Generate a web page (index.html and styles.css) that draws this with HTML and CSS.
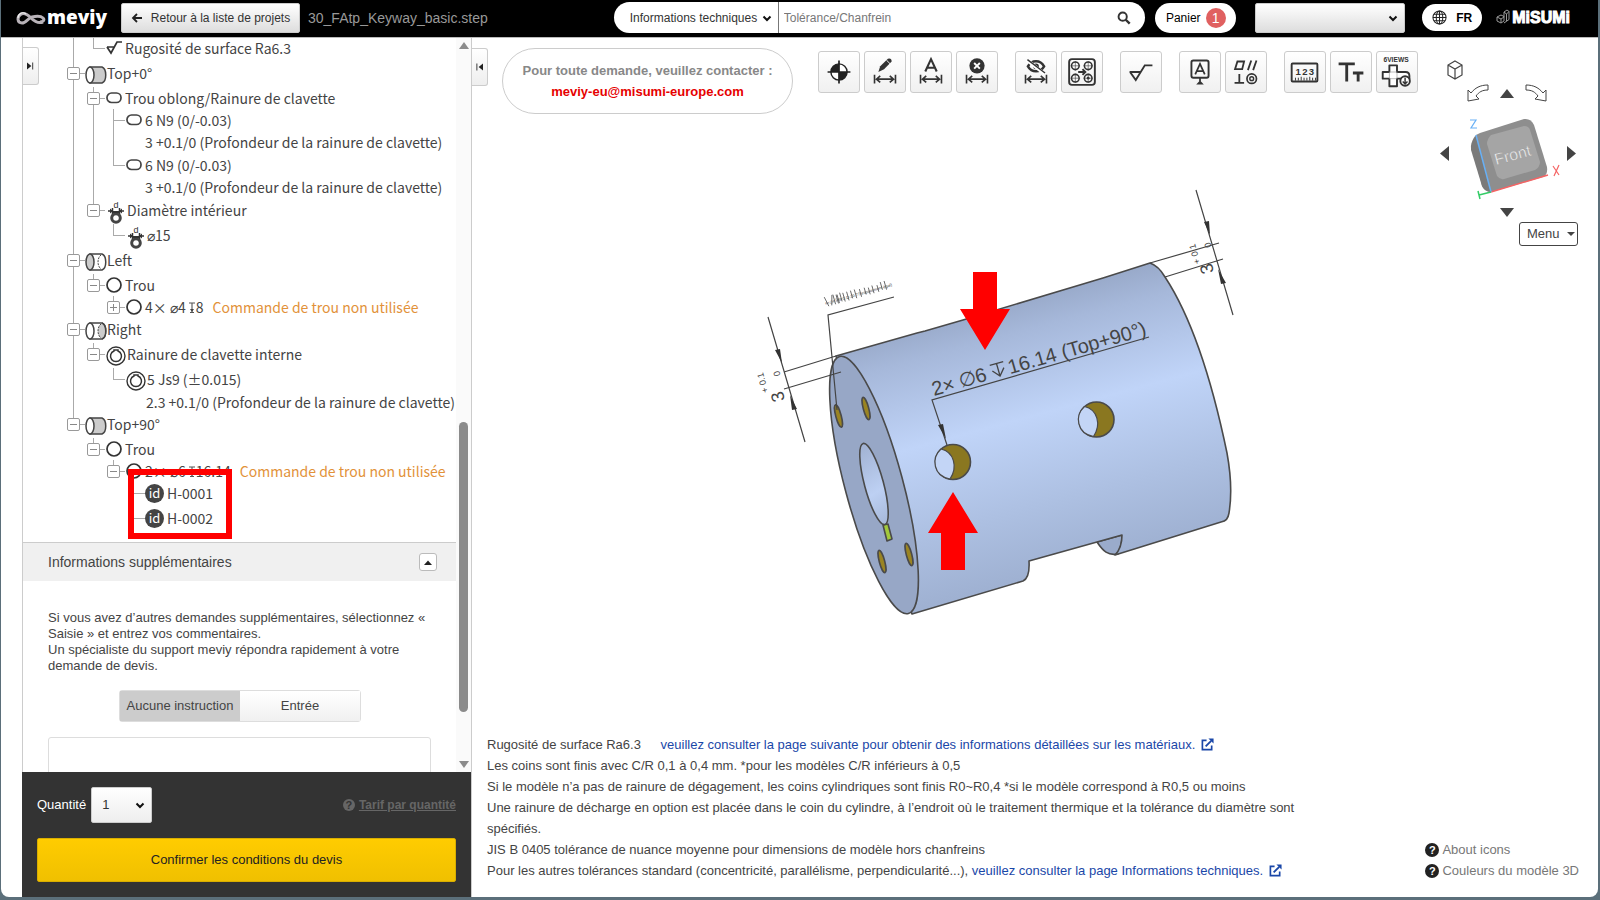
FILE: index.html
```html
<!DOCTYPE html>
<html lang="fr">
<head>
<meta charset="utf-8">
<title>meviy</title>
<link rel="stylesheet" href="styles.css">
</head>
<body>
<svg class="defs" aria-hidden="true">
  <defs>
    <symbol id="cyl-side" viewBox="0 0 22 18"><path d="M5 1h12c5 2 5 14 0 16H5z" fill="#ccc" stroke="#444" stroke-width="1.5"/><ellipse cx="5" cy="9" rx="4" ry="8" fill="#fff" stroke="#444" stroke-width="1.5"/></symbol>
    <symbol id="cyl-left" viewBox="0 0 22 18"><path d="M5 1h12c5 2 5 14 0 16H5z" fill="#fff" stroke="#444" stroke-width="1.5"/><path d="M16 2c-4 3-4 11 0 14" fill="none" stroke="#444" stroke-dasharray="2 1"/><ellipse cx="5" cy="9" rx="4" ry="8" fill="#ccc" stroke="#444" stroke-width="1.5"/></symbol>
    <symbol id="cyl-right" viewBox="0 0 22 18"><path d="M5 1h12c5 2 5 14 0 16H5z" fill="#fff" stroke="#444" stroke-width="1.5"/><path d="M16 2c-4 3-4 11 0 14h1c4-2 4-12 0-14z" fill="#ccc"/><path d="M16 2c-4 3-4 11 0 14" fill="none" stroke="#444" stroke-dasharray="2 1"/><path d="M17 1c5 2 5 14 0 16" fill="none" stroke="#444" stroke-width="1.5"/><ellipse cx="5" cy="9" rx="4" ry="8" fill="#fff" stroke="#444" stroke-width="1.5"/></symbol>
    <symbol id="slot" viewBox="0 0 16 16"><rect x="1" y="3" width="14" height="9.500" rx="4.500" fill="none" stroke="#444" stroke-width="1.700"/></symbol>
    <symbol id="hole" viewBox="0 0 16 16"><circle cx="8" cy="8" r="7" fill="none" stroke="#333" stroke-width="1.700"/></symbol>
    <symbol id="rough" viewBox="0 0 16 16"><path d="M1 7h8M1 7l4 6 6-11h5" fill="none" stroke="#333" stroke-width="1.700"/></symbol>
    <symbol id="dia" viewBox="0 0 16 22"><text x="5.500" y="6" font-size="9" font-family="Liberation Sans" fill="#333">d</text><path d="M0 9h4M12 9h4M4.500 6v9M11.500 6v9" stroke="#333" stroke-width="1.500"/><path d="M2 6.500 5 9 2 11.500zM14 6.500 11 9l3 2.500z" fill="#333"/><circle cx="8" cy="16" r="4.300" fill="none" stroke="#444" stroke-width="3"/><path d="M5 10h6" stroke="#333" stroke-width="2"/></symbol>
    <symbol id="keyway" viewBox="0 0 20 20"><circle cx="10" cy="10" r="9" fill="none" stroke="#333" stroke-width="1.400"/><path d="M8 5V4h4v1a5.500 5.500 0 1 1-4 0z" fill="none" stroke="#333" stroke-width="1.500"/></symbol>
    <symbol id="depth" viewBox="0 0 6 11"><path d="M0 1h6M3 1v9M1 10.500h4" stroke="#555" stroke-width="1.100"/><path d="M1 7h4L3 10z" fill="#444"/></symbol>
    <symbol id="chev" viewBox="0 0 10 7"><path d="M1.500 1.500L5 5l3.500-3.500" fill="none" stroke="#111" stroke-width="2"/></symbol>
    <symbol id="dim" viewBox="0 0 42 42"><path d="M10 24v9M32 24v9M12 28.500h18M16 25l-4 3.500 4 3.500M26 25l4 3.500-4 3.500" fill="none" stroke="#333" stroke-width="1.700"/></symbol>
    <symbol id="ext" viewBox="0 0 14 14"><path d="M6 2.500H1.500v10h10V8" fill="none" stroke="#1a47a8" stroke-width="1.800"/><path d="M5 9l6-6" stroke="#1a47a8" stroke-width="2"/><path d="M8 .5h5.500V6z" fill="#1a47a8"/></symbol>
  </defs>
</svg>
<div class="window">
  <header class="topbar">
    <a class="logo" href="#"><svg class="logo-mark" viewBox="0 0 30 16"><path d="M27 12c-5 2-9-1-12-4S8 2 4.500 4.500 1 13 6 13c4 0 6-5 10-6s9-1 11 1 0 4-3 4" fill="none" stroke="#b8b2b8" stroke-width="3"/><path d="M10 4C6 1 2 4 2 8" fill="none" stroke="#eee" stroke-width="1.200"/></svg><span>meviy</span></a>
    <button class="back" type="button"><svg viewBox="0 0 12 12"><path d="M11 6H2M6 2 2 6l4 4" fill="none" stroke="#222" stroke-width="1.800"/></svg>Retour à la liste de projets</button>
    <span class="filename">30_FAtp_Keyway_basic.step</span>
    <form class="search">
      <span class="pick search-kind"><select aria-label="Catégorie"><option>Informations techniques</option></select><svg><use href="#chev"/></svg></span>
      <input class="search-text" type="text" placeholder="Tolérance/Chanfrein" aria-label="Recherche">
      <button class="search-go" type="button" aria-label="Rechercher"><svg viewBox="0 0 16 16"><circle cx="6.500" cy="6.500" r="4.700" fill="none" stroke="#333" stroke-width="2.200"/><path d="M10 10l4.500 4.500" stroke="#333" stroke-width="2.800"/></svg></button>
    </form>
    <button class="cart" type="button">Panier <span class="count">1</span></button>
    <span class="pick account"><select aria-label="Compte"><option></option></select><svg><use href="#chev"/></svg></span>
    <button class="lang" type="button"><svg viewBox="0 0 16 16"><g fill="none" stroke="#222" stroke-width="1.100"><circle cx="8" cy="8" r="7"/><ellipse cx="8" cy="8" rx="3.500" ry="7"/><path d="M1 8h14M8 1v14M2 4.500h12M2 11.500h12"/></g></svg>FR</button>
    <a class="misumi" href="#"><svg viewBox="0 0 14 18"><path d="M1 8l4-2 3 1.500V12l-3 2-4-2zM1 8l4 2 3-2M5 10v4M8 3l3-2 2 1.500v8L8 14M8 3v5M8 3l2.500 2L13 2.500M10.500 5v7" fill="none" stroke="#999" stroke-width="1"/></svg><span>MiSUMi</span></a>
  </header>

  <div class="main">
    <aside class="rail"></aside>
    <section class="side">
      <button class="tab tab-left" type="button" aria-label="Ouvrir"><svg viewBox="0 0 8 8"><path d="M0 0l5 4-5 4z" fill="#222"/><path d="M6.500 0v8" stroke="#222"/></svg></button>
      <div class="scroll">
        <div class="scroll-body">
          <ul class="tree">
            <li><ul>
              <li><div class="row leaf h25"><svg class="i16"><use href="#rough"/></svg>Rugosité de surface Ra6.3</div></li>
            </ul></li>
            <li><div class="row root h25"><button class="tog" type="button" aria-label="Réduire"></button><svg class="cyl"><use href="#cyl-side"/></svg>Top+0°</div>
              <ul>
                <li><div class="row h22"><button class="tog" type="button" aria-label="Réduire"></button><svg class="i16"><use href="#slot"/></svg>Trou oblong/Rainure de clavette</div>
                  <ul>
                    <li><div class="row leaf h22"><svg class="i16"><use href="#slot"/></svg>6 N9 (0/-0.03)</div><div class="more h23">3 +0.1/0 (Profondeur de la rainure de clavette)</div></li>
                    <li><div class="row leaf h22"><svg class="i16"><use href="#slot"/></svg>6 N9 (0/-0.03)</div><div class="more h23">3 +0.1/0 (Profondeur de la rainure de clavette)</div></li>
                  </ul></li>
                <li><div class="row wide h25"><button class="tog" type="button" aria-label="Réduire"></button><svg class="i20 tall"><use href="#dia"/></svg>Diamètre intérieur</div>
                  <ul><li><div class="row wide leaf h25"><svg class="i20 tall"><use href="#dia"/></svg>⌀15</div></li></ul></li>
              </ul></li>
            <li><div class="row root h25"><button class="tog" type="button" aria-label="Réduire"></button><svg class="cyl"><use href="#cyl-left"/></svg>Left</div>
              <ul>
                <li><div class="row h22"><button class="tog" type="button" aria-label="Réduire"></button><svg class="i16"><use href="#hole"/></svg>Trou</div>
                  <ul><li><div class="row h22"><button class="tog plus" type="button" aria-label="Développer"></button><svg class="i16"><use href="#hole"/></svg><span>4× ⌀4 <svg class="depth"><use href="#depth"/></svg>8</span><span class="warn">Commande de trou non utilisée</span></div></li></ul></li>
              </ul></li>
            <li><div class="row root h25"><button class="tog" type="button" aria-label="Réduire"></button><svg class="cyl"><use href="#cyl-right"/></svg>Right</div>
              <ul>
                <li><div class="row wide h25"><button class="tog" type="button" aria-label="Réduire"></button><svg class="i20"><use href="#keyway"/></svg>Rainure de clavette interne</div>
                  <ul><li><div class="row wide leaf h23"><svg class="i20"><use href="#keyway"/></svg>5 Js9 (±0.015)</div><div class="more wide h22">2.3 +0.1/0 (Profondeur de la rainure de clavette)</div></li></ul></li>
              </ul></li>
            <li><div class="row root h25"><button class="tog" type="button" aria-label="Réduire"></button><svg class="cyl"><use href="#cyl-side"/></svg>Top+90°</div>
              <ul>
                <li><div class="row h22"><button class="tog" type="button" aria-label="Réduire"></button><svg class="i16"><use href="#hole"/></svg>Trou</div>
                  <ul><li><div class="row h22"><button class="tog" type="button" aria-label="Réduire"></button><svg class="i16"><use href="#hole"/></svg><span>2× ⌀6 <svg class="depth"><use href="#depth"/></svg>16.14</span><span class="warn">Commande de trou non utilisée</span></div>
                    <ul class="ids">
                      <li><div class="row leaf h25"><span class="id">id</span>H-0001</div></li>
                      <li><div class="row leaf h25"><span class="id">id</span>H-0002</div></li>
                    </ul></li></ul></li>
              </ul></li>
          </ul>
          <div class="extra-head"><h2>Informations supplémentaires</h2><button type="button" aria-label="Replier"><svg viewBox="0 0 8 5"><path d="M0 5l4-4.500L8 5z" fill="#222"/></svg></button></div>
          <div class="extra">
            <p>Si vous avez d’autres demandes supplémentaires, sélectionnez «<br>Saisie » et entrez vos commentaires.<br>Un spécialiste du support meviy répondra rapidement à votre<br>demande de devis.</p>
            <div class="seg"><button class="on" type="button">Aucune instruction</button><button type="button">Entrée</button></div>
            <textarea aria-label="Commentaires"></textarea>
          </div>
        </div>
        <div class="bar"><i class="up"></i><i class="thumb"></i><i class="down"></i></div>
      </div>
      <footer class="order">
        <div class="order-row"><label for="qty">Quantité</label><span class="pick qty"><select id="qty"><option>1</option></select><svg><use href="#chev"/></svg></span><a class="tarif" href="#"><b class="q">?</b><u>Tarif par quantité</u></a></div>
        <button class="confirm" type="button">Confirmer les conditions du devis</button>
      </footer>
    </section>

    <section class="view">
      <svg class="model" viewBox="740 180 520 450">
        <defs><linearGradient id="body" gradientUnits="userSpaceOnUse" x1="1000" y1="303" x2="1071" y2="567"><stop offset="0" stop-color="#98a9c9"/><stop offset=".12" stop-color="#a6b8da"/><stop offset=".43" stop-color="#c0d4f8"/><stop offset=".75" stop-color="#adc0e2"/><stop offset="1" stop-color="#9fb1d2"/></linearGradient>
        <linearGradient id="bore" gradientUnits="userSpaceOnUse" x1="862" y1="450" x2="885" y2="520"><stop offset="0" stop-color="#a3b4d5"/><stop offset=".6" stop-color="#bdd0f3"/><stop offset="1" stop-color="#a8badb"/></linearGradient></defs>
        <g stroke="#4a4a4a" stroke-width="1.600" stroke-linejoin="round">
          <path d="M1097 542c6 9 11 14 21 12 3-7 4-13 4-19z" fill="#9aabcb"/>
          <path d="M836 356L917 333l8-2 38-11L1093 281l10-3 47-15c6 2 11 7 15 14 25 38 46 99 62 176 4 22 5 42 2 60-1 6-3 8-8 9L1115 555q7-7 7-20L1029 561q1 17-6 20L912 614z" fill="url(#body)"/>
          <ellipse cx="874" cy="485" rx="29" ry="133" transform="rotate(-15 874 485)" fill="#97a7c6"/>
          <path d="M883 525l5-1 4 15-5 2z" fill="#a3c93a"/>
          <ellipse cx="874" cy="484" rx="9.500" ry="42" transform="rotate(-15 874 484)" fill="url(#bore)"/>
          <g fill="#9a8422"><ellipse cx="838.500" cy="416" rx="2.700" ry="11.500" transform="rotate(-15 838.500 416)"/><ellipse cx="866" cy="408.500" rx="2.700" ry="11.500" transform="rotate(-15 866 408.500)"/><ellipse cx="882" cy="561.500" rx="2.700" ry="11.500" transform="rotate(-15 882 561.500)"/><ellipse cx="909" cy="554.500" rx="2.700" ry="11.500" transform="rotate(-15 909 554.500)"/></g>
          <g id="sidehole"><circle cx="953" cy="462" r="17.500" fill="#8a7720"/><path d="M941 449c13 3 17 18 9 30-17-3-19-21-9-30z" fill="#c3d5f6" stroke-width="1.200"/></g>
          <use href="#sidehole" x="143.500" y="-42.500"/>
        </g>
        <g stroke="#444" stroke-width="1.200" fill="none">
          <path d="M894 297l-66 18 9 95M768 317l37 125M784 372l52-16M784 389l57-17M1196 190l37 125M1150 263l69-20M1165 277l58-18M1149 337L932 400l15 45"/>
        </g>
        <path d="M775 350l5-1 2 14zM792 410l5-1-7-14zM1204 222l5-1 1 14zM1221 284l5-1-8-14zM938 425l5-1 3 15z" fill="#333"/>
        <g fill="#444" font-family="Liberation Sans">
          <g font-size="20" transform="translate(934 396) rotate(-16)"><text>2×</text><text x="28">∅6</text><path d="M62-14h14M69-14v13M63-8l6 7 6-7" fill="none" stroke="#444" stroke-width="1.300"/><text x="79">16.14 (Top+90°)</text></g>
          <g transform="translate(785 400) rotate(-105)"><text font-size="18">3</text><text x="12" y="-14" font-size="9">+</text><text x="20" y="-14" font-size="9">0.1</text><text x="25" y="2" font-size="9">0</text></g>
          <g transform="translate(1214 272) rotate(-105)"><text font-size="18">3</text><text x="12" y="-11" font-size="9">+</text><text x="20" y="-11" font-size="9">0.1</text><text x="25" y="4" font-size="9">0</text></g>
          <g transform="translate(826 307) rotate(-16)"><text y="-2" font-size="4">4×∅4↧8P.C.D.20.77(espacement égal)</text><path d="M1-10l2 10M6 0l3-10M10-10v10M13-9v9M14-9v9M17-10v9M20-9v9M24-9v9M28-9v8M32-9v9M37-8v8M42-8v7M46-7v7M50-8v8M55-7v7M59-9v8M63-9v9" stroke="#555" stroke-width=".8"/></g>
        </g>
        <path d="M973 272h24v37h13l-25 41-25-41h13zM941 570h24v-37h13l-25-41-25 41h13z" fill="#f00"/>
      </svg>

      <div class="view-top">
        <button class="tab" type="button" aria-label="Fermer"><svg viewBox="0 0 8 8"><path d="M8 0L3 4l5 4z" fill="#222"/><path d="M1 0v8" stroke="#222"/></svg></button>
        <p class="contact">Pour toute demande, veuillez contacter :<a href="#">meviy-eu@misumi-europe.com</a></p>
        <div class="tools">
          <div class="grp">
            <button type="button" aria-label="Origine"><svg viewBox="0 0 42 42"><circle cx="21" cy="21" r="8.500" fill="#fff" stroke="#222" stroke-width="1.500"/><path d="M21 21v-8.500A8.500 8.500 0 0 0 12.500 21zM21 21v8.500a8.500 8.500 0 0 0 8.500-8.500z" fill="#222"/><path d="M21 9v24M9 21h24" stroke="#222" stroke-width="1.800"/></svg></button>
            <button type="button" aria-label="Modifier la cote"><svg viewBox="0 0 42 42"><use href="#dim"/><path d="M14 21l2-6 8-8q4-1 4 3l-8 8z" fill="#333"/><path d="M22.500 8.500l4 4" stroke="#fff"/></svg></button>
            <button type="button" aria-label="Cote automatique"><svg viewBox="0 0 42 42"><use href="#dim"/><path d="M15 20.500L21 7.500l6 13M17 16.500h8" fill="none" stroke="#333" stroke-width="2.200"/></svg></button>
            <button type="button" aria-label="Supprimer la cote"><svg viewBox="0 0 42 42"><use href="#dim"/><circle cx="21" cy="14.500" r="8" fill="#333"/><path d="M18 11.500l6 6M24 11.500l-6 6" stroke="#fff" stroke-width="2"/></svg></button>
          </div>
          <div class="grp">
            <button type="button" aria-label="Masquer les cotes"><svg viewBox="0 0 42 42"><use href="#dim"/><path d="M12.500 15c4-7 13-7 17 0-4 7-13 7-17 0z" fill="none" stroke="#333" stroke-width="2.600"/><circle cx="21" cy="15" r="3" fill="#333"/><path d="M11.500 8.500L30 23" stroke="#fff" stroke-width="3.500"/><path d="M12 8l18.500 14" stroke="#333" stroke-width="1.500"/></svg></button>
            <button type="button" aria-label="Regrouper les trous"><svg viewBox="0 0 42 42"><rect x="7.500" y="7.500" width="27" height="27" rx="3" fill="none" stroke="#333" stroke-width="2"/><g fill="none" stroke="#333" stroke-width="1.600"><circle cx="14" cy="14.500" r="4"/><circle cx="27.500" cy="14.500" r="4"/><circle cx="14" cy="27.500" r="4"/><circle cx="27.500" cy="27.500" r="4"/></g><circle cx="27.500" cy="27.500" r="1.500" fill="#333"/><path d="M9 14.500h10M14 9.500v10M22.500 14.500h10M27.500 9.500v10M9 27.500h10M14 22.500v10M22.500 27.500h10M27.500 22.500v10" stroke="#333" stroke-width=".6"/><path d="M17 21h7M21.500 18l3 3-3 3" fill="none" stroke="#333" stroke-width="2"/></svg></button>
          </div>
          <div class="grp"><button type="button" aria-label="Rugosité"><svg viewBox="0 0 42 42"><path d="M9 21h12M9.500 21l6 8.500L25 14h8" fill="none" stroke="#333" stroke-width="2"/></svg></button></div>
          <div class="grp">
            <button type="button" aria-label="Référence"><svg viewBox="0 0 42 42"><rect x="12" y="9" width="18" height="18" rx="2" fill="none" stroke="#333" stroke-width="2"/><path d="M16 23.500l5-11 5 11M18 20h6M21 27v4" fill="none" stroke="#333" stroke-width="1.800"/><path d="M17 34l4-4 4 4z" fill="#333"/></svg></button>
            <button type="button" aria-label="Tolérance géométrique"><svg viewBox="0 0 42 42"><path d="M9.500 18l2.500-8h7l-2 8zM23 19l3.500-10M28.500 19L32 9M9 32.500h10M14 23v9.500" fill="none" stroke="#333" stroke-width="1.900"/><circle cx="27" cy="28" r="5" fill="none" stroke="#333" stroke-width="1.800"/><circle cx="27" cy="28" r="2" fill="none" stroke="#333" stroke-width="1.500"/></svg></button>
          </div>
          <div class="grp">
            <button type="button" aria-label="Mesure"><svg viewBox="0 0 42 42"><rect x="7" y="12" width="27" height="19" rx="1" fill="none" stroke="#333" stroke-width="2"/><path d="M11 30v-3M14 30v-3M17 30v-4M20 30v-3M23 30v-3M26 30v-4M29 30v-3M32 30v-3" stroke="#333"/><text x="11" y="24" font-size="10" font-weight="700" fill="#333">1</text><text x="18" y="24" font-size="10" font-weight="700" fill="#333">2</text><text x="25" y="24" font-size="10" font-weight="700" fill="#333">3</text></svg></button>
            <button type="button" aria-label="Taille du texte"><svg viewBox="0 0 42 42"><path d="M8 12.500h17M16.500 12v19M23 22h11M28.500 22v9" fill="none" stroke="#333" stroke-width="3"/></svg></button>
            <button type="button" aria-label="Six vues"><svg viewBox="0 0 42 42"><text x="20" y="10" font-size="7" font-weight="700" text-anchor="middle" fill="#333">6VIEWS</text><path d="M13 14h8v7h9q4 0 4 4v3H21v8h-8v-8H6v-7h7z" fill="#fff" stroke="#333" stroke-width="2" stroke-linejoin="round"/><path d="M13 21h8v7h-8z" fill="none" stroke="#999" stroke-width=".7"/><circle cx="29.500" cy="30.500" r="5" fill="#fff" stroke="#333" stroke-width="2"/><path d="M29.500 27v6M27 31l2.500 2.500L32 31" fill="none" stroke="#333" stroke-width="1.500"/></svg></button>
          </div>
        </div>
        <nav class="orient" aria-label="Orientation">
          <button class="home" type="button" aria-label="Vue isométrique"><svg viewBox="0 0 16 20"><path d="M8 1l7 4v10l-7 4-7-4V5zM1 5l7 4 7-4M8 9v10" fill="none" stroke="#444" stroke-width="1.200"/></svg></button>
          <div class="orow spin">
            <button type="button" aria-label="Rotation gauche"><svg width="22" height="18" viewBox="0 0 22 18"><path d="M21 1v5c-6 0-9 2-12 6l3 3-11 2V6l3 3C8 4 13 1 21 1z" fill="#fff" stroke="#444"/></svg></button>
            <button type="button" aria-label="Haut"><svg width="14" height="9" viewBox="0 0 14 9"><path d="M0 9l7-9 7 9z" fill="#444"/></svg></button>
            <button type="button" aria-label="Rotation droite"><svg width="22" height="18" viewBox="0 0 22 18"><path d="M1 1v5c6 0 9 2 12 6l-3 3 11 2V6l-3 3C14 4 9 1 1 1z" fill="#fff" stroke="#444"/></svg></button>
          </div>
          <div class="orow mid">
            <button type="button" aria-label="Gauche"><svg width="9" height="15" viewBox="0 0 9 15"><path d="M9 0v15L0 7.500z" fill="#444"/></svg></button>
            <svg class="cube" viewBox="-4 -9 100 88"><path d="M10 26q0-8 8-11L62 1q7-1 10 6l13 42q1 8-4 10L29 74q-6 0-9-6z" fill="#8e8e8e"/><path d="M14 18q-6 6-5 14l11 36q2 5 9 6z" fill="#7a7a7a"/><path d="M29 17l33-9q5 0 6 4l10 32q0 5-5 8l-31 9q-4 1-7-3L25 26q0-5 4-9z" fill="#a5a5a5"/><text x="34" y="47" transform="rotate(-15 34 47)" font-size="16" fill="#f0f0f0" stroke="#888" stroke-width=".3">Front</text><path d="M29 74l57-17" stroke="#f56464" stroke-width="1.500"/><path d="M14 17l15 57" stroke="#68b0f5" stroke-width="1.500"/><path d="M29 74l-12 3M16 73l2 8" stroke="#3c6" stroke-width="1.500"/><path d="M8 2h6L9 10h6" fill="none" stroke="#68b0f5" stroke-width="1.200"/><path d="M91 48l6 9M97 47l-5 11" stroke="#f56464" stroke-width="1.200"/></svg>
            <button type="button" aria-label="Droite"><svg width="9" height="15" viewBox="0 0 9 15"><path d="M0 0v15l9-7.500z" fill="#444"/></svg></button>
          </div>
          <div class="orow low"><button type="button" aria-label="Bas"><svg width="14" height="9" viewBox="0 0 14 9"><path d="M0 0l7 9 7-9z" fill="#444"/></svg></button></div>
          <button class="menu" type="button">Menu<i></i></button>
        </nav>
      </div>

      <div class="view-bottom">
        <div class="notes">
          <p>Rugosité de surface Ra6.3 <a class="gap" href="#">veuillez consulter la page suivante pour obtenir des informations détaillées sur les matériaux.<svg><use href="#ext"/></svg></a></p>
          <p>Les coins sont finis avec C/R 0,1 à 0,4 mm. *pour les modèles C/R inférieurs à 0,5</p>
          <p>Si le modèle n’a pas de rainure de dégagement, les coins cylindriques sont finis R0~R0,4 *si le modèle correspond à R0,5 ou moins</p>
          <p>Une rainure de décharge en option est placée dans le coin du cylindre, à l’endroit où le traitement thermique et la tolérance du diamètre sont spécifiés.</p>
          <p>JIS B 0405 tolérance de nuance moyenne pour dimensions de modèle hors chanfreins</p>
          <p>Pour les autres tolérances standard (concentricité, parallélisme, perpendicularité...), <a href="#">veuillez consulter la page Informations techniques.<svg><use href="#ext"/></svg></a></p>
        </div>
        <div class="help"><a href="#"><b class="q">?</b>About icons</a><a href="#"><b class="q">?</b>Couleurs du modèle 3D</a></div>
      </div>
    </section>
  </div>
</div>
</body>
</html>
```

FILE: styles.css
```css
*, *::before, *::after { box-sizing: border-box; }
body { margin: 0; height: 100vh; padding: 0 2px 3px 1px; background: #5b6f7a; font: 13px/16px "Liberation Sans", Arial, sans-serif; color: #444; }
button, select, input, textarea { font: inherit; color: inherit; margin: 0; padding: 0; }
button { cursor: pointer; }
p, h2, ul { margin: 0; padding: 0; list-style: none; font-weight: 400; }
a { text-decoration: none; color: inherit; }
svg { display: block; flex: none; }
.defs { position: absolute; width: 0; height: 0; }

.window { display: flex; flex-direction: column; height: 100%; background: #fff; border-radius: 0 0 8px 8px; overflow: hidden; }
.topbar { display: flex; align-items: center; height: 38px; padding: 0 28px 2px 15px; background: #000; border-bottom: 1px solid #bbb; flex: none; font-size: 12px; }
.logo { display: flex; align-items: center; width: 105px; color: #fff; font: 800 19px/24px "Open Sans", sans-serif; }
.logo span { margin-top: -2px; }
.logo-mark { width: 30px; height: 16px; margin-right: 1px; }
.back { display: flex; align-items: center; justify-content: center; gap: 8px; width: 179px; height: 30px; border: 1px solid #ccc; border-radius: 2px; background: linear-gradient(#fff, #ddd); color: #333; }
.back svg { width: 12px; height: 12px; }
.filename { margin-left: 8px; font-size: 14px; color: #999; }
.pick { position: relative; display: block; flex: none; }
.pick select { width: 100%; height: 100%; border: 0; outline: 0; background: none; appearance: none; }
.pick svg { position: absolute; right: 6px; top: 50%; width: 10px; height: 7px; margin-top: -3px; pointer-events: none; }
.search { display: flex; flex: 1; height: 31px; margin-left: 126px; border-radius: 16px; background: #fff; overflow: hidden; }
.search-kind { width: 165px; padding-left: 16px; border-right: 1px solid #777; color: #333; }
.search-text { flex: 1; min-width: 0; padding-left: 5px; border: 0; outline: 0; }
.search-text::placeholder { color: #777; }
.search-go { width: 40px; border: 0; background: none; }
.search-go svg { width: 14px; height: 14px; margin-left: 12px; }
.cart { display: flex; align-items: center; justify-content: center; gap: 5px; width: 81px; height: 30px; margin-left: 10px; border: 0; border-radius: 15px; background: #fff; color: #000; }
.count { width: 20px; height: 20px; border-radius: 50%; background: #e06060; color: #fff; font-size: 14px; line-height: 20px; }
.account { width: 150px; height: 30px; margin-left: 19px; border: 1px solid #ccc; border-radius: 2px; background: linear-gradient(#fff, #ddd); color: #000; }
.lang { display: flex; align-items: center; justify-content: center; gap: 9px; width: 60px; height: 27px; margin-left: 17px; border: 0; border-radius: 14px; background: #fff; color: #000; font-weight: 700; }
.lang svg { width: 15px; height: 15px; }
.misumi { display: flex; align-items: center; gap: 2px; margin-left: 14px; color: #fff; font-size: 16px; font-weight: 700; -webkit-text-stroke: 1px #fff; }
.misumi svg { width: 14px; height: 18px; }

.main { display: flex; flex: 1; min-height: 0; }
.rail { width: 21px; flex: none; }
.side { position: relative; display: flex; flex-direction: column; width: 450px; flex: none; border-left: 1px solid #ccc; border-right: 1px solid #ccc; }
.tab { display: flex; align-items: center; justify-content: center; width: 16px; height: 38px; border: 1px solid #ccc; border-left: 0; border-radius: 0 3px 3px 0; background: linear-gradient(#fff, #eee); }
.tab svg { width: 7px; height: 8px; }
.tab-left { position: absolute; left: 0; top: 9px; z-index: 2; }
.scroll { display: flex; flex: 1; min-height: 0; overflow: hidden; }
.scroll-body { flex: 1; min-width: 0; overflow: hidden; }

.tree { height: 505px; margin-top: -1px; padding-left: 50px; font: 14px/22px "Noto Sans CJK JP", "Noto Sans", sans-serif; white-space: nowrap; }
.tree ul { padding-left: 20px; }
.tree li { position: relative; }
.tree li::before { content: ""; position: absolute; left: 0; top: 0; bottom: 0; width: 1px; background: #aaa; }
.tree li:last-child::before { bottom: auto; height: 12px; }
.row { position: relative; display: flex; gap: 3px; padding-left: 13px; }
.row::before { content: ""; position: absolute; left: 0; top: 11px; width: 12px; height: 1px; background: #aaa; }
.row.root { gap: 0; padding-left: 12px; }
.row.wide { gap: 1px; }
.more { padding-left: 32px; }
.more.wide { padding-left: 33px; }
.h22 { height: 22px; }
.h23 { height: 23px; }
.h25 { height: 25px; }
.i16 { width: 16px; height: 16px; margin-top: 3px; }
.i20 { width: 20px; height: 20px; margin-top: 3px; }
.i20.tall { height: 22px; }
.cyl { width: 22px; height: 18px; margin-top: 4px; }
.depth { display: inline-block; width: 6px; height: 11px; margin-right: 1px; vertical-align: 0; }
.tog { position: absolute; left: -6px; top: 5px; width: 13px; height: 13px; border: 1px solid #999; border-radius: 2px; background: linear-gradient(#888, #888) center / 7px 1px no-repeat #fff; }
.tog.plus { background: linear-gradient(#888, #888) center / 7px 1px no-repeat, linear-gradient(#888, #888) center / 1px 7px no-repeat #fff; }
.warn { margin-left: 6px; color: #e2923a; }
.ids .row { padding-left: 12px; }
.id { width: 19px; height: 19px; margin-top: 2px; border-radius: 50%; background: #444; color: #fff; font-size: 13px; line-height: 18px; text-align: center; }
.ids { position: relative; }
.ids::after { content: ""; position: absolute; left: 15px; top: -13px; width: 104px; height: 70px; border: 6px solid #f00; }

.extra-head { display: flex; align-items: center; justify-content: space-between; height: 39px; padding: 0 19px 0 25px; border-top: 1px solid #ccc; background: #f0f0f0; }
.extra-head h2 { font-size: 14px; }
.extra-head button { display: flex; align-items: center; justify-content: center; width: 18px; height: 18px; border: 1px solid #bbb; border-radius: 3px; background: #fff; }
.extra-head svg { width: 8px; height: 5px; }
.extra { padding: 29px 25px 0; }
.seg { display: flex; width: 242px; height: 32px; margin: 16px auto 0 71px; border: 1px solid #ddd; border-radius: 3px; }
.seg button { flex: 1; border: 0; background: linear-gradient(#fff, #f0f0f0); }
.seg .on { background: #ccc; }
.extra textarea { display: block; width: 100%; height: 80px; margin-top: 15px; border: 1px solid #ddd; border-radius: 3px; resize: none; }
.bar { display: flex; flex-direction: column; align-items: center; width: 15px; padding: 4px 0; background: #fafafa; }
.up, .down { border: 5px solid transparent; }
.up { border-top: 0; border-bottom: 7px solid #8b8b8b; }
.down { border-bottom: 0; border-top: 7px solid #8b8b8b; margin-top: auto; }
.thumb { width: 9px; height: 40%; margin-top: 373px; border-radius: 5px; background: #8b8b8b; }

.order { padding: 15px; height: 125px; background: #333; margin: 0 0 0 -1px; flex: none; }
.order-row { display: flex; align-items: center; height: 36px; color: #fff; }
.qty { width: 61px; height: 36px; margin-left: 5px; padding-left: 10px; border: 1px solid #ccc; border-radius: 2px; background: linear-gradient(#fff, #eee); color: #333; }
.tarif { display: flex; align-items: center; gap: 4px; margin-left: auto; color: #666; font-size: 12px; font-weight: 700; }
.q { display: inline-block; width: 14px; height: 14px; border-radius: 50%; background: #222; color: #fff; font: 700 11px/14px "Liberation Sans", sans-serif; text-align: center; }
.tarif .q { width: 12px; height: 12px; background: #666; color: #333; line-height: 12px; }
.confirm { width: 100%; height: 44px; margin-top: 15px; border: 1px solid #d9ae00; border-radius: 2px; background: linear-gradient(#fc0, #f0c000); color: #222; }

.view { position: relative; display: flex; flex-direction: column; justify-content: space-between; flex: 1; min-width: 0; }
.model { position: absolute; left: 268px; top: 142px; width: 520px; height: 450px; }
.view-top { position: relative; display: flex; align-items: flex-start; padding: 10px 20px 0 0; }
.contact { width: 291px; height: 66px; margin-left: 14px; padding: 11px 0; border: 1px solid #ccc; border-radius: 33px; color: #888; font-weight: 700; line-height: 21px; text-align: center; background: #fff; }
.contact a { display: block; color: #e60000; }
.tools { display: flex; gap: 17px; margin: 3px 0 0 25px; }
.grp { display: flex; gap: 4px; }
.grp button { width: 42px; height: 42px; border: 1px solid #ccc; border-radius: 3px; background: linear-gradient(#fff, #f0f0f0); }
.grp svg { width: 40px; height: 40px; }
.orient { display: flex; flex-direction: column; width: 138px; margin-left: auto; padding-top: 12px; }
.orient button { border: 0; background: none; }
.home { width: 16px; margin-left: 7px; }
.home svg { width: 16px; height: 20px; }
.orow { display: flex; align-items: center; justify-content: center; }
.spin { gap: 11px; margin-top: 4px; padding-right: 4px; }
.mid { justify-content: space-between; height: 92px; margin-top: 5px; padding-right: 2px; }
.cube { width: 100px; height: 88px; overflow: visible; font-family: "Liberation Sans", sans-serif; }
.low { margin-top: 9px; padding-right: 4px; }
.orient .menu { display: flex; align-items: center; gap: 7px; align-self: flex-end; width: 59px; height: 24px; margin-top: 5px; padding-left: 7px; border: 1px solid #444; border-radius: 3px; background: #fff; }
.menu i { border: 4px solid transparent; border-top-color: #444; border-bottom: 0; }

.view-bottom { position: relative; display: flex; align-items: flex-end; justify-content: space-between; padding: 0 19px 16px 15px; line-height: 21px; }
.notes { max-width: 830px; }
.notes a { color: #1a47a8; }
.notes .gap { margin-left: 16px; }
.notes svg { display: inline-block; width: 13px; height: 13px; margin-left: 6px; vertical-align: -2px; }
.help a { display: flex; align-items: center; gap: 3px; color: #777; }
```
